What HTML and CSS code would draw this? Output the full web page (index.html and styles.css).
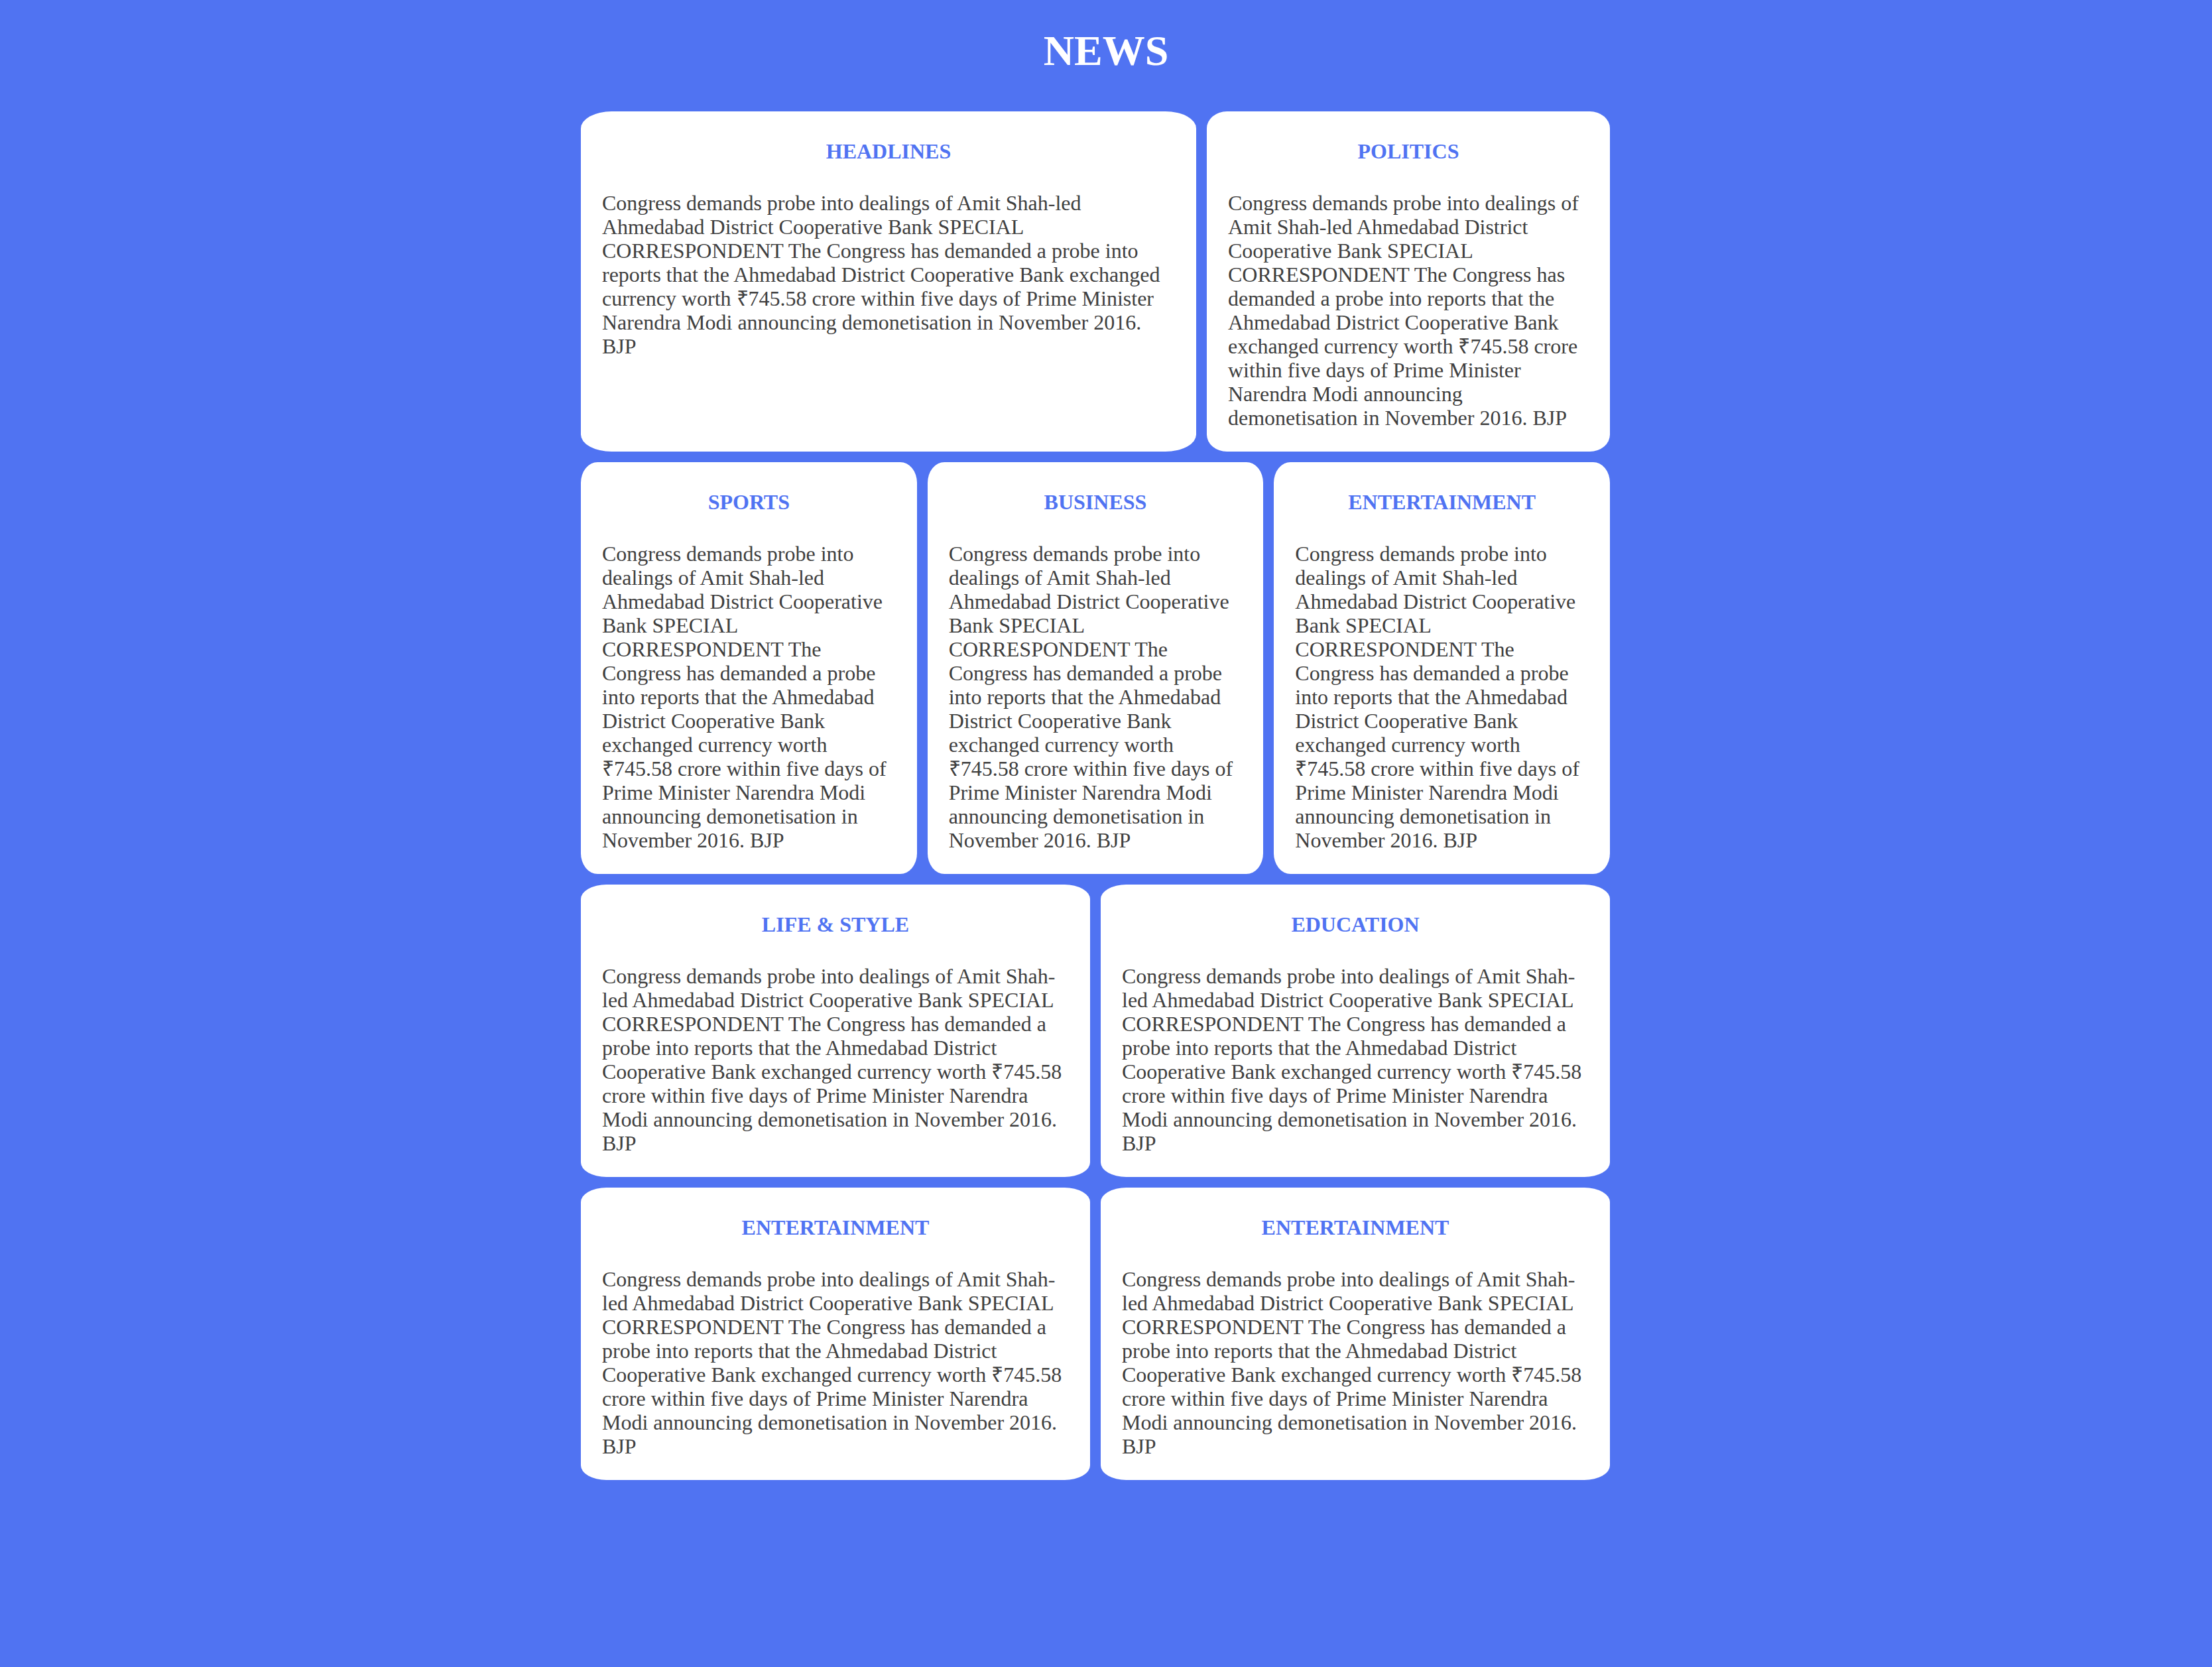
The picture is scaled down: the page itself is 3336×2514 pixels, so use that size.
FILE: index.html
```html
<!DOCTYPE html>
<html lang="en">
<head>
<meta charset="utf-8">
<title>News</title>
<link rel="stylesheet" href="styles.css">
</head>
<body>
<h1 class="title">NEWS</h1>
<main class="board">
  <div class="row row-top">
    <section class="card">
      <h4 class="card-title">HEADLINES</h4>
      <p class="card-text">Congress demands probe into dealings of Amit Shah-led Ahmedabad District Cooperative Bank SPECIAL CORRESPONDENT The Congress has demanded a probe into reports that the Ahmedabad District Cooperative Bank exchanged currency worth ₹745.58 crore within five days of Prime Minister Narendra Modi announcing demonetisation in November 2016. BJP</p>
    </section>
    <section class="card">
      <h4 class="card-title">POLITICS</h4>
      <p class="card-text">Congress demands probe into dealings of Amit Shah-led Ahmedabad District Cooperative Bank SPECIAL CORRESPONDENT The Congress has demanded a probe into reports that the Ahmedabad District Cooperative Bank exchanged currency worth ₹745.58 crore within five days of Prime Minister Narendra Modi announcing demonetisation in November 2016. BJP</p>
    </section>
  </div>
  <div class="row row-three">
    <section class="card">
      <h4 class="card-title">SPORTS</h4>
      <p class="card-text">Congress demands probe into dealings of Amit Shah-led Ahmedabad District Cooperative Bank SPECIAL CORRESPONDENT The Congress has demanded a probe into reports that the Ahmedabad District Cooperative Bank exchanged currency worth ₹745.58 crore within five days of Prime Minister Narendra Modi announcing demonetisation in November 2016. BJP</p>
    </section>
    <section class="card">
      <h4 class="card-title">BUSINESS</h4>
      <p class="card-text">Congress demands probe into dealings of Amit Shah-led Ahmedabad District Cooperative Bank SPECIAL CORRESPONDENT The Congress has demanded a probe into reports that the Ahmedabad District Cooperative Bank exchanged currency worth ₹745.58 crore within five days of Prime Minister Narendra Modi announcing demonetisation in November 2016. BJP</p>
    </section>
    <section class="card">
      <h4 class="card-title">ENTERTAINMENT</h4>
      <p class="card-text">Congress demands probe into dealings of Amit Shah-led Ahmedabad District Cooperative Bank SPECIAL CORRESPONDENT The Congress has demanded a probe into reports that the Ahmedabad District Cooperative Bank exchanged currency worth ₹745.58 crore within five days of Prime Minister Narendra Modi announcing demonetisation in November 2016. BJP</p>
    </section>
  </div>
  <div class="row row-two">
    <section class="card">
      <h4 class="card-title">LIFE &amp; STYLE</h4>
      <p class="card-text">Congress demands probe into dealings of Amit Shah-led Ahmedabad District Cooperative Bank SPECIAL CORRESPONDENT The Congress has demanded a probe into reports that the Ahmedabad District Cooperative Bank exchanged currency worth ₹745.58 crore within five days of Prime Minister Narendra Modi announcing demonetisation in November 2016. BJP</p>
    </section>
    <section class="card">
      <h4 class="card-title">EDUCATION</h4>
      <p class="card-text">Congress demands probe into dealings of Amit Shah-led Ahmedabad District Cooperative Bank SPECIAL CORRESPONDENT The Congress has demanded a probe into reports that the Ahmedabad District Cooperative Bank exchanged currency worth ₹745.58 crore within five days of Prime Minister Narendra Modi announcing demonetisation in November 2016. BJP</p>
    </section>
  </div>
  <div class="row row-two">
    <section class="card">
      <h4 class="card-title">ENTERTAINMENT</h4>
      <p class="card-text">Congress demands probe into dealings of Amit Shah-led Ahmedabad District Cooperative Bank SPECIAL CORRESPONDENT The Congress has demanded a probe into reports that the Ahmedabad District Cooperative Bank exchanged currency worth ₹745.58 crore within five days of Prime Minister Narendra Modi announcing demonetisation in November 2016. BJP</p>
    </section>
    <section class="card">
      <h4 class="card-title">ENTERTAINMENT</h4>
      <p class="card-text">Congress demands probe into dealings of Amit Shah-led Ahmedabad District Cooperative Bank SPECIAL CORRESPONDENT The Congress has demanded a probe into reports that the Ahmedabad District Cooperative Bank exchanged currency worth ₹745.58 crore within five days of Prime Minister Narendra Modi announcing demonetisation in November 2016. BJP</p>
    </section>
  </div>
</main>
</body>
</html>
```
FILE: styles.css
```css
html, body {
  margin: 0;
  padding: 0;
}

body {
  background: #5073f2;
  font-family: "Liberation Serif", "Times New Roman", serif;
  font-size: 32px;
  color: #404040;
  min-height: 2514px;
}

.title {
  margin: 40px 0 54px;
  font-size: 64px;
  line-height: 1.15;
  font-weight: bold;
  color: #ffffff;
  text-align: center;
}

.board {
  width: 1584px;
  margin: 0 auto;
  padding-right: 32px;
  box-sizing: border-box;
  display: flex;
  flex-direction: column;
  gap: 16px;
}

.row {
  display: grid;
  gap: 16px;
}

.row-top {
  grid-template-columns: 928fr 608fr;
}

.row-three {
  grid-template-columns: 1fr 1fr 1fr;
}

.row-two {
  grid-template-columns: 1fr 1fr;
}

.card {
  background: #ffffff;
  border-radius: 5%;
  padding: 42px 32px 33px;
}

.card-title {
  margin: 0 0 42px;
  font-size: 32px;
  line-height: 36px;
  font-weight: bold;
  color: #5073f2;
  text-align: center;
}

.card-text {
  margin: 0;
  font-size: 32px;
  line-height: 36px;
}
```
